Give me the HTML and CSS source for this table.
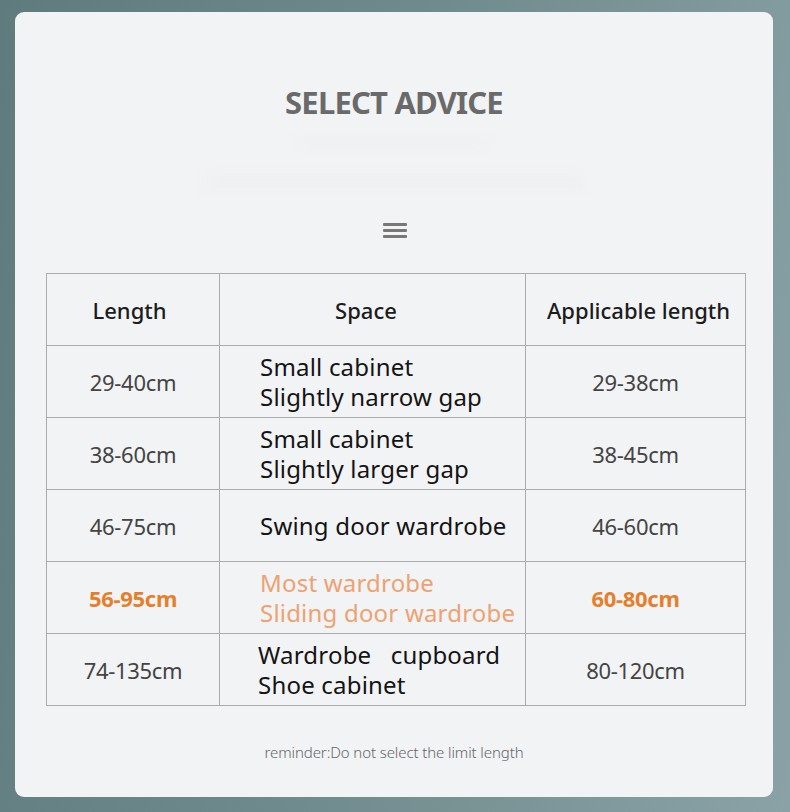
FILE: index.html
```html
<!DOCTYPE html>
<html lang="en">
<head>
<meta charset="utf-8">
<title>Select Advice</title>
<link rel="stylesheet" href="styles.css">
</head>
<body>
<main class="card">
  <h1 class="title">SELECT ADVICE</h1>
  <div class="ghost" aria-hidden="true">
    <span class="ghost-line ghost-a"></span>
    <span class="ghost-line ghost-b"></span>
  </div>
  <svg class="menu-icon" width="24" height="15" viewBox="0 0 24 15" aria-hidden="true">
    <rect x="0" y="0" width="24" height="3" rx="1" fill="#777"/>
    <rect x="0" y="6" width="24" height="3" rx="1" fill="#777"/>
    <rect x="0" y="12" width="24" height="3" rx="1" fill="#777"/>
  </svg>
  <table class="advice">
    <colgroup>
      <col class="c1"><col class="c2"><col class="c3">
    </colgroup>
    <thead>
      <tr><th class="h1">Length</th><th class="h2">Space</th><th class="h3">Applicable length</th></tr>
    </thead>
    <tbody>
      <tr><td class="num">29-40cm</td><td class="space">Small cabinet<br>Slightly narrow gap</td><td class="num">29-38cm</td></tr>
      <tr><td class="num">38-60cm</td><td class="space">Small cabinet<br>Slightly larger gap</td><td class="num">38-45cm</td></tr>
      <tr><td class="num">46-75cm</td><td class="space">Swing door wardrobe</td><td class="num">46-60cm</td></tr>
      <tr class="hot"><td class="num">56-95cm</td><td class="space">Most wardrobe<br>Sliding door wardrobe</td><td class="num">60-80cm</td></tr>
      <tr><td class="num">74-135cm</td><td class="space shift">Wardrobe&nbsp;&nbsp; cupboard<br>Shoe cabinet</td><td class="num">80-120cm</td></tr>
    </tbody>
  </table>
  <p class="reminder">reminder:Do not select the limit length</p>
</main>
</body>
</html>
```

FILE: styles.css
```css
html, body {
  margin: 0;
  padding: 0;
}
body {
  width: 790px;
  height: 812px;
  overflow: hidden;
  background: linear-gradient(100deg, #5f7b7d 0%, #6f8a8c 45%, #8aa2a5 100%);
  font-family: "Noto Sans", "Open Sans", sans-serif;
}
.card {
  box-sizing: border-box;
  width: 758px;
  height: 785px;
  margin: 12px 0 0 15px;
  background: #f2f3f5;
  border-radius: 9px;
  display: flex;
  flex-direction: column;
  align-items: center;
  padding-top: 69px;
}
.title {
  margin: 0;
  font-family: "Noto Sans", sans-serif;
  font-weight: 700;
  font-size: 31px;
  line-height: 42px;
  letter-spacing: -0.8px;
  color: #6a6a6a;
}
.ghost {
  height: 96px;
  width: 420px;
  display: flex;
  flex-direction: column;
  align-items: center;
}
.ghost-line {
  display: block;
  background: #eef0f2;
  filter: blur(4px);
  border-radius: 6px;
}
.ghost-a {
  width: 190px;
  height: 8px;
  margin-top: 16px;
}
.ghost-b {
  width: 380px;
  height: 16px;
  margin-top: 28px;
}
.menu-icon {
  display: block;
  margin-top: 4px;
  margin-left: 2px;
}
.advice {
  margin-top: 35px;
  width: 699px;
  border-collapse: collapse;
  table-layout: fixed;
  margin-left: 4px;
}
.c1 { width: 173px; }
.c2 { width: 306px; }
.c3 { width: 220px; }
.advice th,
.advice td {
  border: 1px solid #ababab;
  height: 71px;
  padding: 0;
  text-align: center;
  vertical-align: middle;
}
.advice th {
  font-weight: 500;
  font-size: 22px;
  color: #1c1c1c;
}
.advice th.h1 { padding-right: 7px; }
.advice th.h2 { padding-right: 13px; }
.advice th.h3 { padding-left: 6px; }
.advice td.num {
  font-size: 22px;
  color: #444;
  letter-spacing: -0.3px;
}
.advice td.space {
  text-align: left;
  padding-left: 40px;
  font-size: 24px;
  line-height: 30px;
  color: #141414;
  letter-spacing: 0.2px;
}
.advice td.space.shift {
  padding-left: 38px;
}
.advice tr.hot td.num {
  color: #e57f2c;
  font-weight: 700;
}
.advice tr.hot td.space {
  color: #eda271;
}
.reminder {
  margin: 36px 0 0 0;
  font-size: 15px;
  color: #666;
  letter-spacing: -0.1px;
  font-weight: 300;
}
```
